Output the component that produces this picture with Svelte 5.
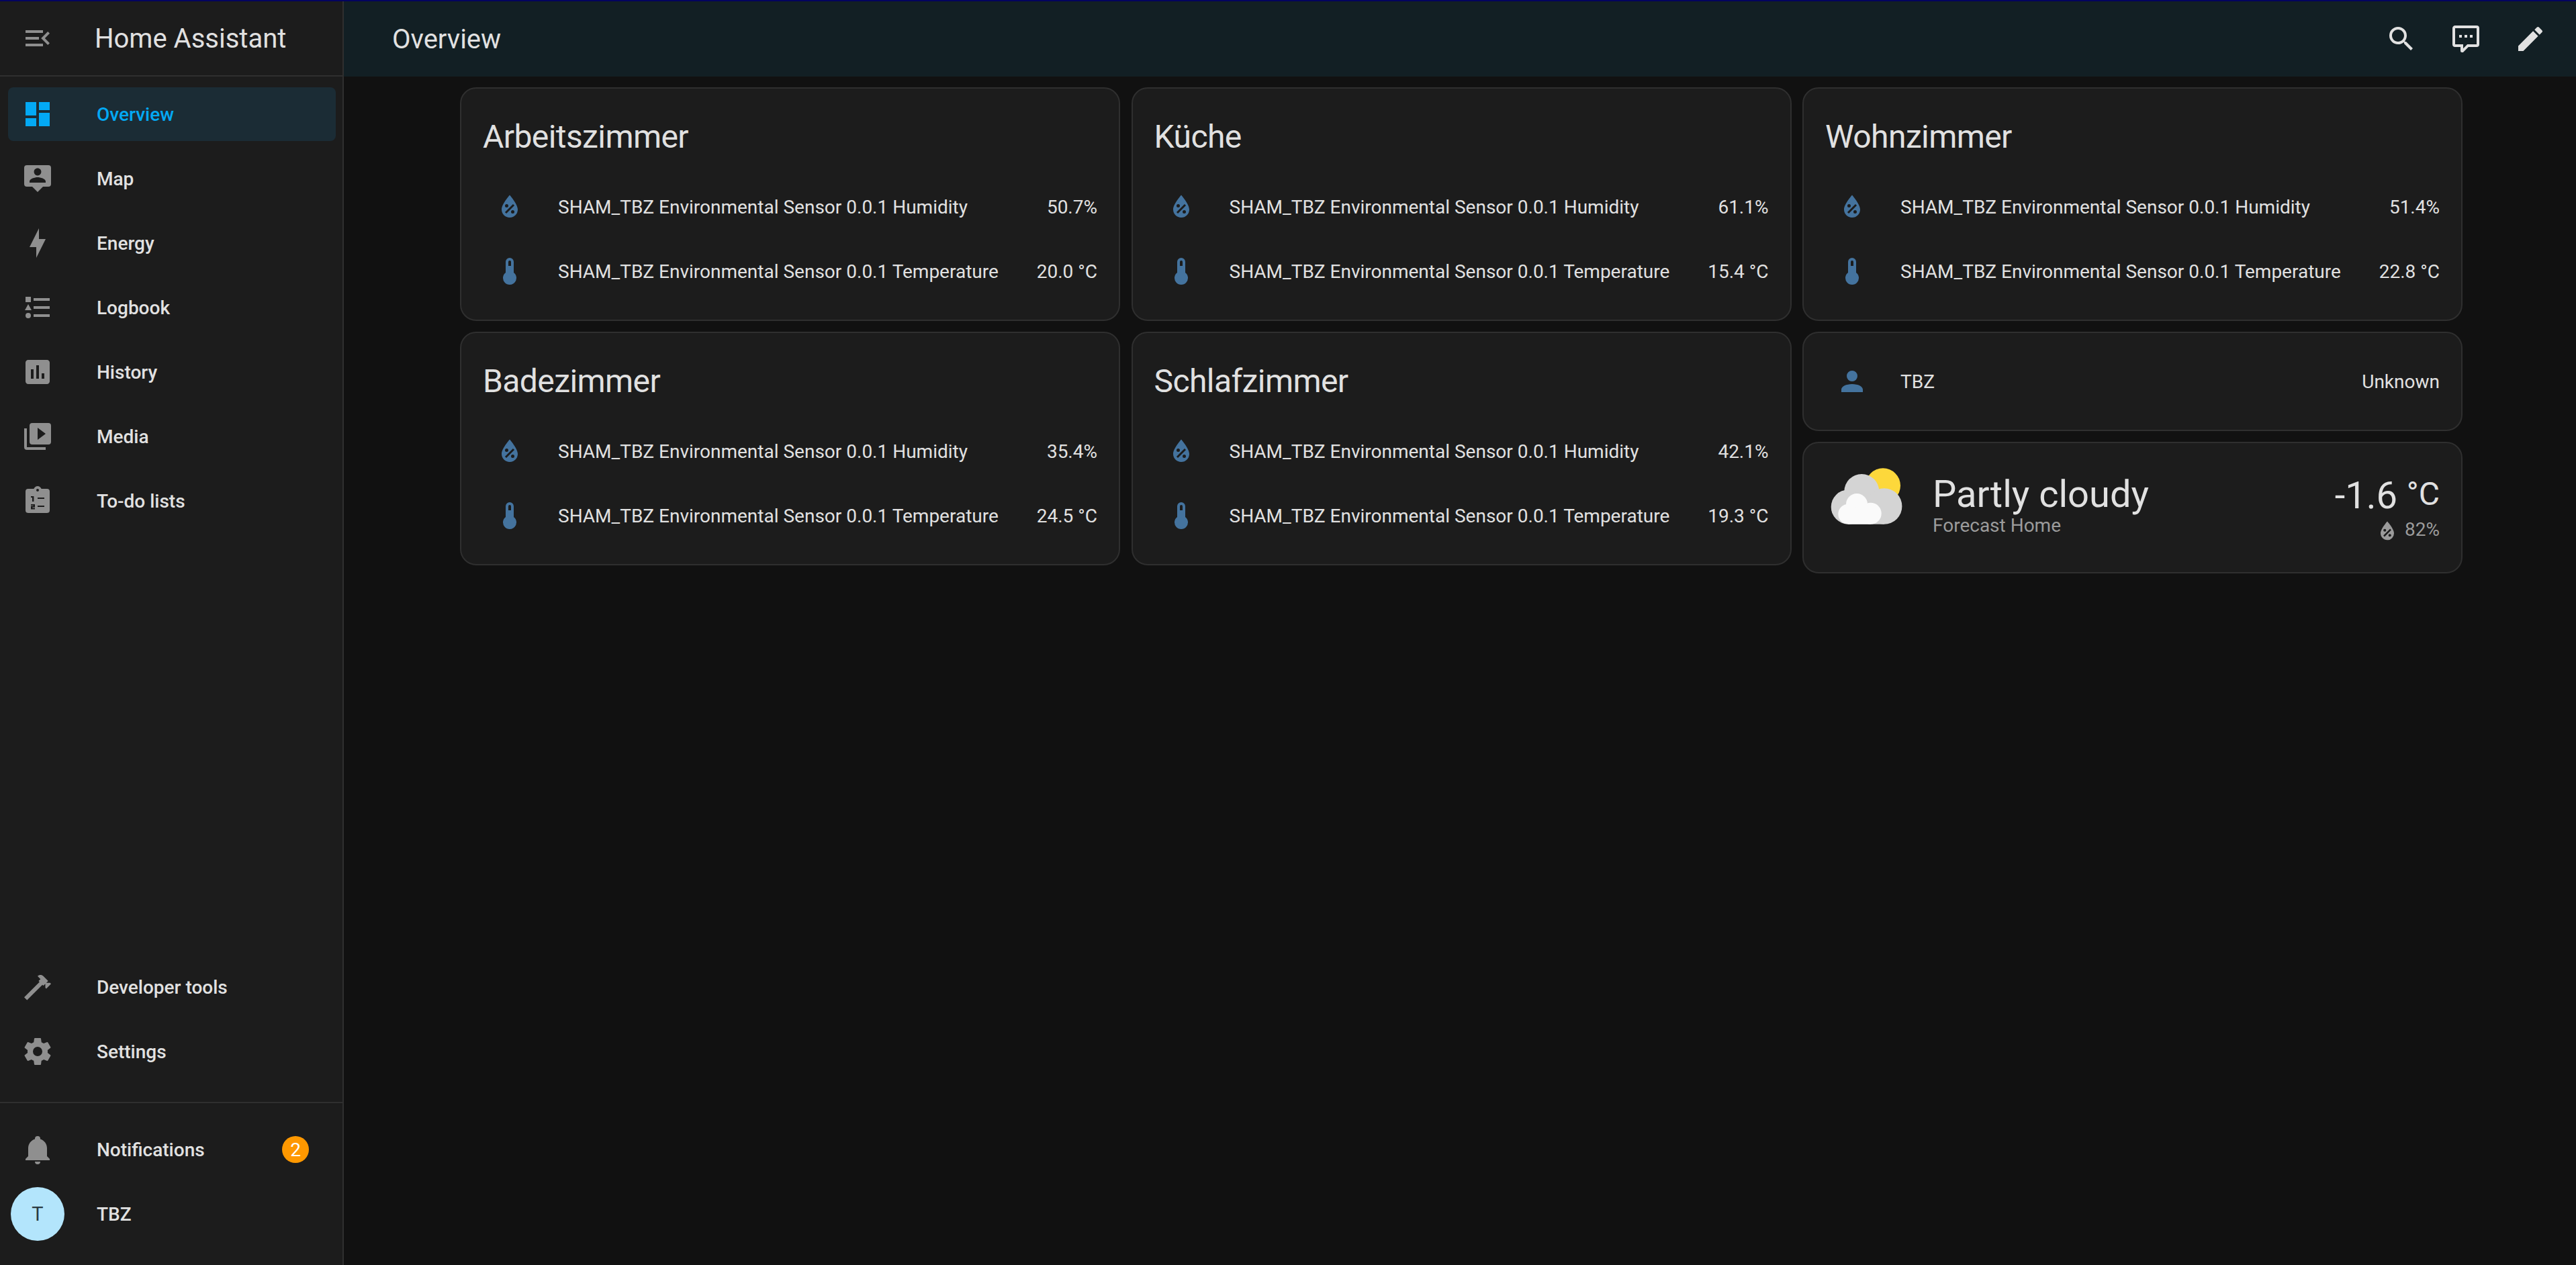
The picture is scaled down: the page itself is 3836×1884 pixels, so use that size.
<script>
  const icons = {
    menu: 'M21,15.61L19.59,17L14.58,12L19.59,7L21,8.39L17.44,12L21,15.61M3,6H16V8H3V6M3,13V11H13V13H3M3,18V16H16V18H3Z',
    dashboard: 'M13,3V9H21V3M13,21H21V11H13M3,21H11V15H3M3,13H11V3H3V13Z',
    map: 'M20 2H4A2 2 0 0 0 2 4V16A2 2 0 0 0 4 18H8L12 22L16 18H20A2 2 0 0 0 22 16V4A2 2 0 0 0 20 2M12 4.3C13.5 4.3 14.7 5.5 14.7 7C14.7 8.5 13.5 9.7 12 9.7C10.5 9.7 9.3 8.5 9.3 7C9.3 5.5 10.5 4.3 12 4.3M18 15H6V14.1C6 12.1 10 11 12 11C14 11 18 12.1 18 14.1V15Z',
    energy: 'M11 15H6L13 1V9H18L11 23V15Z',
    logbook: 'M5,9.5L7.5,14H2.5L5,9.5M3,4H7V8H3V4M5,20A2,2 0 0,0 7,18A2,2 0 0,0 5,16A2,2 0 0,0 3,18A2,2 0 0,0 5,20M9,5V7H21V5H9M9,19H21V17H9V19M9,13H21V11H9V13Z',
    history: 'M19 3H5C3.9 3 3 3.9 3 5V19C3 20.1 3.9 21 5 21H19C20.1 21 21 20.1 21 19V5C21 3.9 20.1 3 19 3M9 17H7V10H9V17M13 17H11V7H13V17M17 17H15V13H17V17Z',
    media: 'M4,6H2V20A2,2 0 0,0 4,22H18V20H4M20,2H8A2,2 0 0,0 6,4V16A2,2 0 0,0 8,18H20A2,2 0 0,0 22,16V4A2,2 0 0,0 20,2M12,14.5V5.5L18,10L12,14.5Z',
    todo: 'M19,3H14.82C14.4,1.84 13.3,1 12,1C10.7,1 9.6,1.84 9.18,3H5A2,2 0 0,0 3,5V19A2,2 0 0,0 5,21H19A2,2 0 0,0 21,19V5A2,2 0 0,0 19,3M12,3A1,1 0 0,1 13,4A1,1 0 0,1 12,5A1,1 0 0,1 11,4A1,1 0 0,1 12,3M12,9.5H17V10.5H12ZM12,15.5H17V16.5H12ZM7,8.5H9.2V12.5H8V9.5H7ZM7,14.5H10V16.7H8.2V17.2H10V18.2H7V15.8H8.8V15.4H7Z',
    hammer: 'M2 19.63L13.43 8.2L12.72 7.5L14.14 6.07L12 3.89C13.2 2.7 15.09 2.7 16.27 3.89L19.87 7.5L18.45 8.91H21.29L22 9.62L18.45 13.21L17.74 12.5V9.62L16.27 11.04L15.56 10.33L4.13 21.76L2 19.63Z',
    cog: 'M12,15.5A3.5,3.5 0 0,1 8.5,12A3.5,3.5 0 0,1 12,8.5A3.5,3.5 0 0,1 15.5,12A3.5,3.5 0 0,1 12,15.5M19.43,12.97C19.47,12.65 19.5,12.33 19.5,12C19.5,11.67 19.47,11.34 19.43,11L21.54,9.37C21.73,9.22 21.78,8.95 21.66,8.73L19.66,5.27C19.54,5.05 19.27,4.96 19.05,5.05L16.56,6.05C16.04,5.66 15.5,5.32 14.87,5.07L14.5,2.42C14.46,2.18 14.25,2 14,2H10C9.75,2 9.54,2.18 9.5,2.42L9.13,5.07C8.5,5.32 7.96,5.66 7.44,6.05L4.95,5.05C4.73,4.96 4.46,5.05 4.34,5.27L2.34,8.73C2.21,8.95 2.27,9.22 2.46,9.37L4.57,11C4.53,11.34 4.5,11.67 4.5,12C4.5,12.33 4.53,12.65 4.57,12.97L2.46,14.63C2.27,14.78 2.21,15.05 2.34,15.27L4.34,18.73C4.46,18.95 4.73,19.03 4.95,18.95L7.44,17.94C7.96,18.34 8.5,18.68 9.13,18.93L9.5,21.58C9.54,21.82 9.75,22 10,22H14C14.25,22 14.46,21.82 14.5,21.58L14.87,18.93C15.5,18.67 16.04,18.34 16.56,17.94L19.05,18.95C19.27,19.03 19.54,18.95 19.66,18.73L21.66,15.27C21.78,15.05 21.73,14.78 21.54,14.63L19.43,12.97Z',
    bell: 'M21,19V20H3V19L5,17V11C5,7.9 7.03,5.17 10,4.29C10,4.19 10,4.1 10,4A2,2 0 0,1 12,2A2,2 0 0,1 14,4C14,4.1 14,4.19 14,4.29C16.97,5.17 19,7.9 19,11V17L21,19M14,21A2,2 0 0,1 12,23A2,2 0 0,1 10,21',
    search: 'M9.5,3A6.5,6.5 0 0,1 16,9.5C16,11.11 15.41,12.59 14.44,13.73L14.71,14H15.5L20.5,19L19,20.5L14,15.5V14.71L13.73,14.44C12.59,15.41 11.11,16 9.5,16A6.5,6.5 0 0,1 3,9.5A6.5,6.5 0 0,1 9.5,3M9.5,5C7,5 5,7 5,9.5C5,12 7,14 9.5,14C12,14 14,12 14,9.5C14,7 12,5 9.5,5Z',
    assist: 'M9,22A1,1 0 0,1 8,21V18H4A2,2 0 0,1 2,16V4C2,2.89 2.9,2 4,2H20A2,2 0 0,1 22,4V16A2,2 0 0,1 20,18H13.9L10.2,21.71C10,21.9 9.75,22 9.5,22V22H9M10,16V19.08L13.08,16H20V4H4V16H10M17,11H15V9H17V11M13,11H11V9H13V11M9,11H7V9H9V11Z',
    pencil: 'M20.71,7.04C21.1,6.65 21.1,6 20.71,5.63L18.37,3.29C18,2.9 17.35,2.9 16.96,3.29L15.12,5.12L18.87,8.87M3,17.25V21H6.75L17.81,9.93L14.06,6.18L3,17.25Z',
    humidity: 'M12,3.25C12,3.25 6,10 6,14C6,17.32 8.69,20 12,20A6,6 0 0,0 18,14C18,10 12,3.25 12,3.25M14.47,9.97L15.53,11.03L9.53,17.03L8.47,15.97M9.75,10A1.25,1.25 0 0,1 11,11.25A1.25,1.25 0 0,1 9.75,12.5A1.25,1.25 0 0,1 8.5,11.25A1.25,1.25 0 0,1 9.75,10M14.25,14.5A1.25,1.25 0 0,1 15.5,15.75A1.25,1.25 0 0,1 14.25,17A1.25,1.25 0 0,1 13,15.75A1.25,1.25 0 0,1 14.25,14.5Z',
    thermometer: 'M15 13V5A3 3 0 0 0 9 5V13A5 5 0 1 0 15 13M12 4A1 1 0 0 1 13 5V8H11V5A1 1 0 0 1 12 4Z',
    account: 'M12,4A4,4 0 0,1 16,8A4,4 0 0,1 12,12A4,4 0 0,1 8,8A4,4 0 0,1 12,4M12,14C16.42,14 20,15.79 20,18V20H4V18C4,15.79 7.58,14 12,14Z'
  };

  const navTop = [
    { label: 'Overview', icon: 'dashboard', active: true },
    { label: 'Map', icon: 'map' },
    { label: 'Energy', icon: 'energy' },
    { label: 'Logbook', icon: 'logbook' },
    { label: 'History', icon: 'history' },
    { label: 'Media', icon: 'media' },
    { label: 'To-do lists', icon: 'todo' }
  ];

  const navBottom = [
    { label: 'Developer tools', icon: 'hammer' },
    { label: 'Settings', icon: 'cog' }
  ];

  const columns = [
    [
      { name: 'Arbeitszimmer', humidity: '50.7%', temperature: '20.0 °C' },
      { name: 'Badezimmer', humidity: '35.4%', temperature: '24.5 °C' }
    ],
    [
      { name: 'Küche', humidity: '61.1%', temperature: '15.4 °C' },
      { name: 'Schlafzimmer', humidity: '42.1%', temperature: '19.3 °C' }
    ]
  ];

  const wohnzimmer = { name: 'Wohnzimmer', humidity: '51.4%', temperature: '22.8 °C' };
  const sensor = 'SHAM_TBZ Environmental Sensor 0.0.1';
</script>

{#snippet icon(name, cls = '')}
  <svg class="icon {cls}" viewBox="0 0 24 24" aria-hidden="true">
    <path fill-rule="evenodd" d={icons[name]} />
  </svg>
{/snippet}

{#snippet roomCard(room)}
  <section class="card">
    <h2>{room.name}</h2>
    <div class="rows">
      <div class="row">
        <span class="badge-icon">{@render icon('humidity')}</span>
        <span class="row-name">{sensor} Humidity</span>
        <span class="row-value">{room.humidity}</span>
      </div>
      <div class="row">
        <span class="badge-icon">{@render icon('thermometer')}</span>
        <span class="row-name">{sensor} Temperature</span>
        <span class="row-value">{room.temperature}</span>
      </div>
    </div>
  </section>
{/snippet}

<div class="stripe"></div>
<div class="shell">
  <aside class="sidebar">
    <div class="brand">
      <span class="menu-btn">{@render icon('menu')}</span>
      <span class="brand-title">Home Assistant</span>
    </div>

    <nav class="nav">
      {#each navTop as item}
        <div class="nav-item" class:active={item.active}>
          {@render icon(item.icon)}
          <span>{item.label}</span>
        </div>
      {/each}
    </nav>

    <nav class="nav tools">
      {#each navBottom as item}
        <div class="nav-item">
          {@render icon(item.icon)}
          <span>{item.label}</span>
        </div>
      {/each}
    </nav>

    <div class="nav account-nav">
      <div class="nav-item">
        {@render icon('bell')}
        <span>Notifications</span>
        <span class="count">2</span>
      </div>
      <div class="nav-item">
        <span class="avatar">T</span>
        <span>TBZ</span>
      </div>
    </div>
  </aside>

  <main class="main">
    <header class="topbar">
      <span class="page-title">Overview</span>
      <div class="actions">
        <span class="action">{@render icon('search')}</span>
        <span class="action">{@render icon('assist')}</span>
        <span class="action">{@render icon('pencil')}</span>
      </div>
    </header>

    <div class="board">
      {#each columns as column}
        <div class="column">
          {#each column as room}
            {@render roomCard(room)}
          {/each}
        </div>
      {/each}

      <div class="column">
        {@render roomCard(wohnzimmer)}

        <section class="card person">
          <div class="row">
            <span class="badge-icon">{@render icon('account')}</span>
            <span class="row-name">TBZ</span>
            <span class="row-value">Unknown</span>
          </div>
        </section>

        <section class="card weather">
          <svg class="weather-icon" viewBox="0 0 128 128" aria-hidden="true">
            <circle cx="86" cy="31.3" r="26" fill="#fdd83b" />
            <g fill="#d4d4d4">
              <circle cx="54.3" cy="40" r="26" />
              <circle cx="34.3" cy="63" r="25.6" />
              <circle cx="87.7" cy="62" r="26.7" />
              <rect x="34.3" y="45" width="53.4" height="43.7" />
            </g>
            <g fill="#fafafa">
              <circle cx="47" cy="59" r="16" />
              <circle cx="34.3" cy="73.7" r="15" />
              <circle cx="67.7" cy="72.7" r="16" />
              <rect x="34.3" y="68" width="33.4" height="20.7" />
            </g>
          </svg>
          <div class="weather-info">
            <div class="condition">Partly cloudy</div>
            <div class="forecast">Forecast Home</div>
          </div>
          <div class="weather-values">
            <div class="temperature">-1.6 <span class="unit">°C</span></div>
            <div class="attribute">{@render icon('humidity', 'small')}<span>82%</span></div>
          </div>
        </section>
      </div>
    </div>
  </main>
</div>

<style>
  :global(body) {
    margin: 0;
    background: #111111;
    color: #e1e1e1;
    font-family: Roboto, "Liberation Sans", sans-serif;
  }

  .stripe {
    height: 2px;
    background: #03035f;
  }

  .shell {
    display: flex;
    height: 1882px;
    overflow: hidden;
  }

  .icon {
    display: block;
    width: 48px;
    height: 48px;
    flex: none;
    fill: currentColor;
  }

  /* Sidebar */
  .sidebar {
    width: 510px;
    flex: none;
    display: flex;
    flex-direction: column;
    background: #1c1c1c;
    border-right: 2px solid #2f2f2f;
  }

  .brand {
    height: 110px;
    flex: none;
    display: flex;
    align-items: center;
    gap: 61px;
    padding-left: 32px;
    border-bottom: 2px solid #2f2f2f;
  }

  .menu-btn {
    color: #8f8f8f;
  }

  .brand-title {
    font-size: 40px;
    font-weight: 400;
  }

  .nav {
    display: flex;
    flex-direction: column;
    gap: 16px;
    padding: 16px 10px 0 12px;
  }

  .tools {
    margin-top: auto;
    padding-bottom: 35px;
  }

  .account-nav {
    border-top: 2px solid #2f2f2f;
    padding-top: 29px;
    padding-bottom: 36px;
  }

  .nav-item {
    height: 80px;
    display: flex;
    align-items: center;
    gap: 64px;
    padding: 0 40px 0 20px;
    border-radius: 8px;
    color: #8f8f8f;
  }

  .nav-item span {
    font-size: 28px;
    font-weight: 500;
    color: #e1e1e1;
  }

  .nav-item.active {
    background: #1b2c35;
    color: #03a9f4;
  }

  .nav-item.active span {
    color: #03a9f4;
  }

  .nav-item .count {
    margin-left: auto;
    width: 40px;
    height: 40px;
    border-radius: 50%;
    background: #ff9800;
    color: #ffffff;
    font-weight: 400;
    display: flex;
    align-items: center;
    justify-content: center;
  }

  .nav-item .avatar {
    width: 80px;
    height: 80px;
    margin: 0 -16px;
    flex: none;
    border-radius: 50%;
    background: #b3e5fc;
    color: #2b3a42;
    font-size: 29px;
    font-weight: 400;
    display: flex;
    align-items: center;
    justify-content: center;
  }

  /* Main */
  .main {
    flex: 1;
    min-width: 0;
  }

  .topbar {
    height: 112px;
    display: flex;
    align-items: center;
    justify-content: space-between;
    padding: 0 20px 0 72px;
    background: #121f24;
  }

  .page-title {
    font-size: 40px;
    font-weight: 400;
  }

  .actions {
    display: flex;
    color: #e1e1e1;
  }

  .action {
    width: 96px;
    display: flex;
    justify-content: center;
  }

  .board {
    display: grid;
    grid-template-columns: repeat(3, 983px);
    column-gap: 16.5px;
    justify-content: center;
    padding: 16px 0 0 4px;
  }

  .column {
    display: flex;
    flex-direction: column;
    gap: 16px;
    min-width: 0;
  }

  .card {
    background: #1c1c1c;
    border: 2px solid #2f2f2f;
    border-radius: 24px;
    padding: 0 32px 32px;
  }

  h2 {
    margin: 0;
    padding: 40px 0 32px;
    font-size: 48px;
    line-height: 64px;
    font-weight: 400;
    letter-spacing: -0.012em;
  }

  .rows {
    display: flex;
    flex-direction: column;
    gap: 16px;
  }

  .row {
    height: 80px;
    display: flex;
    align-items: center;
    font-size: 28px;
  }

  .badge-icon {
    width: 80px;
    flex: none;
    display: flex;
    justify-content: center;
    color: #44739e;
  }

  .row-name {
    margin-left: 32px;
    flex: 1;
    white-space: nowrap;
  }

  .person {
    padding-top: 32px;
  }

  /* Weather card */
  .weather {
    padding: 32px;
    height: 128px;
    display: flex;
  }

  .weather-icon {
    width: 128px;
    height: 128px;
    flex: none;
  }

  .weather-info {
    margin-left: 32px;
    flex: 1;
    padding-top: 12px;
  }

  .condition {
    font-size: 56px;
    line-height: 64px;
  }

  .forecast {
    margin-top: 1px;
    font-size: 28px;
    line-height: 28px;
    color: #9b9b9b;
  }

  .weather-values {
    padding-top: 12px;
    text-align: right;
  }

  .temperature {
    font-size: 56px;
    line-height: 64px;
    height: 64px;
  }

  .unit {
    font-size: 48px;
    vertical-align: 5px;
  }

  .attribute {
    display: flex;
    align-items: center;
    justify-content: flex-end;
    gap: 6px;
    height: 40px;
    font-size: 28px;
    color: #9b9b9b;
  }

  .attribute .icon {
    width: 40px;
    height: 40px;
    margin-top: 6px;
  }
</style>
